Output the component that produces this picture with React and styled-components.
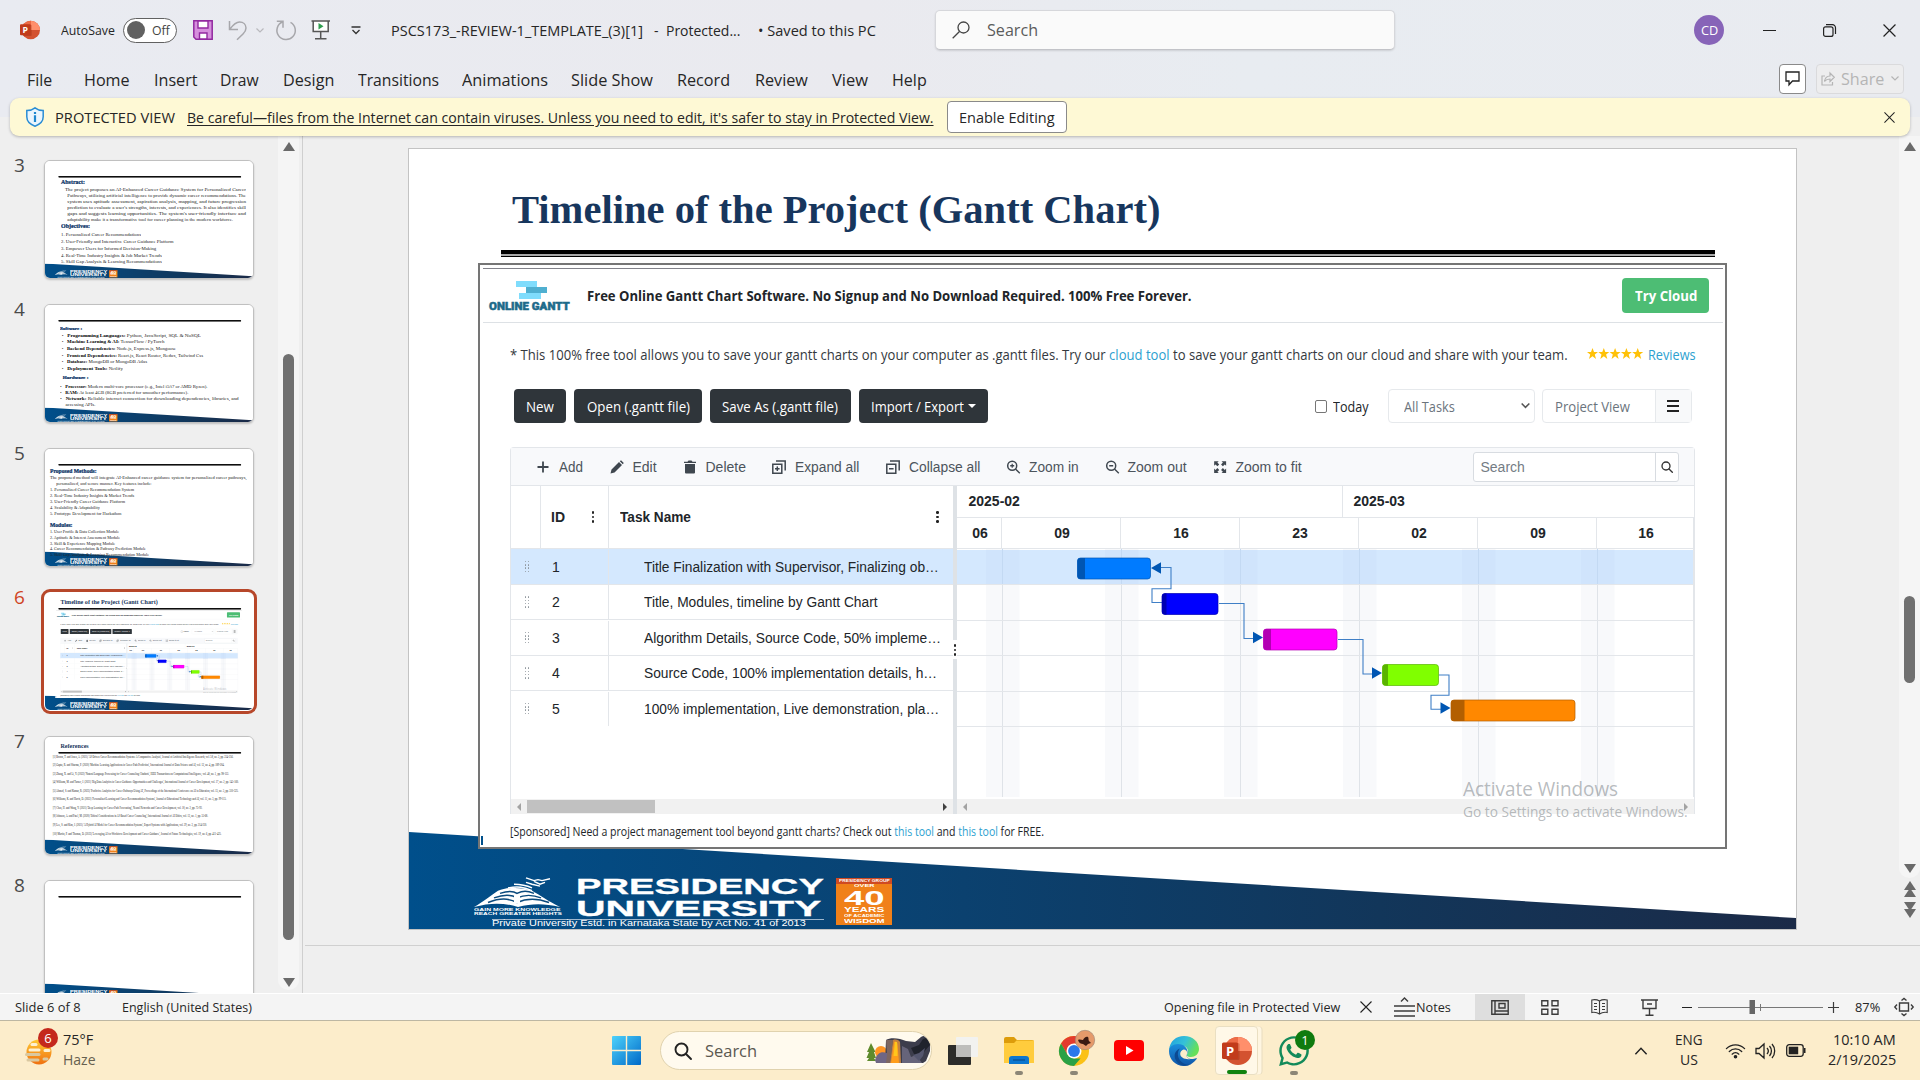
import React, { useLayoutEffect, useRef, useState } from "react";
import styled, { createGlobalStyle, css } from "styled-components";
import { FaWhatsapp } from "react-icons/fa";

const UI = `"Open Sans", "Noto Sans", sans-serif`;
const ARIAL = `"Liberation Sans", Arial, sans-serif`;
const SERIF = `"Liberation Serif", "Times New Roman", serif`;

const Global = createGlobalStyle`
  * { box-sizing: border-box; }
  html, body { margin: 0; padding: 0; width: 1920px; height: 1080px; overflow: hidden; }
  body { font-family: ${UI}; color: #262626; }
  svg { display: block; overflow: visible; flex: none; }
`;

/* ---------- text that keeps a given width ---------- */

const FitBox = styled.span`
  display: block;
  flex: none;
  width: ${(p) => p.$w}px;
  margin-left: ${(p) => p.$ml || 0}px;
  white-space: nowrap;
  font-size: ${(p) => (p.$size ? `${p.$size}px` : "inherit")};
  font-weight: ${(p) => p.$weight || "inherit"};
  color: ${(p) => p.$color || "inherit"};
`;
const FitInner = styled.span`
  display: inline-block;
  transform-origin: 0 50%;
`;

function Fit({ w, ml, size, weight, color, children }) {
  const ref = useRef(null);
  const [k, setK] = useState(1);
  useLayoutEffect(() => {
    const natural = ref.current.offsetWidth;
    if (natural) setK(w / natural);
  }, [w]);
  return (
    <FitBox $w={w} $ml={ml} $size={size} $weight={weight} $color={color}>
      <FitInner ref={ref} style={{ transform: `scaleX(${k})` }}>
        {children}
      </FitInner>
    </FitBox>
  );
}

const Slot = styled.span`
  display: flex;
  flex: none;
  align-items: center;
  width: ${(p) => p.$w}px;
  margin-left: ${(p) => p.$ml || 0}px;
  justify-content: ${(p) => (p.$center ? "center" : "flex-start")};
`;

/* ---------- icons ---------- */

const PowerPointIcon = ({ size = 20 }) => (
  <svg width={size} height={size} viewBox="0 0 30 30">
    <circle cx="16" cy="15" r="14" fill="#d35230" />
    <path d="M16 1a14 14 0 0 1 14 14H16z" fill="#ff8f6b" />
    <path d="M16 1A14 14 0 0 0 2 15h14z" fill="#ed6c47" />
    <rect x="4" y="7" width="13.5" height="17" rx="1.5" fill="#8d2a12" opacity=".35" />
    <rect x="0" y="6.500" width="16" height="16.500" rx="1.500" fill="#c13b1b" />
    <text x="8" y="19.500" textAnchor="middle" fontFamily="Open Sans, sans-serif" fontWeight="700" fontSize="13" fill="#fff">P</text>
  </svg>
);
const SaveIcon = () => (
  <svg width="20" height="20" viewBox="0 0 20 20">
    <path d="M.8.800h18.400v18.400H3L.8 17z" fill="#d68fdd" stroke="#9229a0" strokeWidth="1.500" />
    <path d="M5 1h10v7H5zM6.500 19v-6h7.500v6z" fill="#fff" stroke="#9229a0" strokeWidth="1.400" />
  </svg>
);
const UndoIcon = () => (
  <svg width="20" height="20" viewBox="0 0 20 20" fill="none" stroke="#a7a7ab" strokeWidth="1.500">
    <path d="M1.500 1v8.500H10M1.800 9.200C5 5 8 2 11.500 2c4 0 6.500 2.500 6.500 6 0 2.500-1 4-3 6l-6 5.800" />
  </svg>
);
const RedoIcon = () => (
  <svg width="20" height="20" viewBox="0 0 20 20" fill="none" stroke="#a7a7ab" strokeWidth="1.500">
    <path d="M.8 1.200H7v6.500M6.800 1.800A9.200 9.200 0 1 0 14.500 2.300" />
  </svg>
);
const Chevron = ({ w = 8, color = "#8a8a8a", up, sw = 1.2 }) => (
  <svg width={w} height={w / 2 + 1} viewBox="0 0 8 5" fill="none" stroke={color} strokeWidth={sw}>
    <path d={up ? "M.5 4.500 4 .8l3.500 3.700" : "M.5.500 4 4 7.500.500"} />
  </svg>
);
const PresentIcon = () => (
  <svg width="20" height="20" viewBox="0 0 20 20" fill="none" stroke="#555" strokeWidth="1.500">
    <path d="M.5 1h18.500M2.200 1v10.500h15V1" fill="#fff" />
    <path d="M9.700 11.500v7M4 18.800h11.500" />
    <path d="m7.500 3 5 3.200-5 3.300z" fill="#2e9e4f" stroke="none" />
  </svg>
);
const CustomizeIcon = () => (
  <svg width="10" height="9" viewBox="0 0 10 9" fill="none" stroke="#333" strokeWidth="1.300">
    <path d="M.5 1h9M1.500 4 5 7.500 8.500 4" />
  </svg>
);
const LoupeIcon = ({ size = 18, flip, color = "#444", sw = 1.3 }) => (
  <svg width={size} height={size} viewBox="0 0 18 18" fill="none" stroke={color} strokeWidth={sw}>
    {flip ? <><circle cx="11.500" cy="6.500" r="5.500" /><path d="M7.500 10.500.700 17.300" /></> : <><circle cx="7.500" cy="7.500" r="6" /><path d="m12 12 5 5" strokeLinecap="round" /></>}
  </svg>
);
const CrossIcon = ({ size = 13, color = "#222" }) => (
  <svg width={size} height={size} viewBox="0 0 12 12" stroke={color} strokeWidth="1.100"><path d="m.5.500 11 11M11.500.500l-11 11" /></svg>
);
const RestoreIcon = () => (
  <svg width="13" height="13" viewBox="0 0 13 13" fill="none" stroke="#222" strokeWidth="1.200">
    <rect x=".6" y="2.800" width="9.400" height="9.600" rx="2" /><path d="M3 .7h6.500a3 3 0 0 1 3 3V10" />
  </svg>
);
const ShieldIcon = () => (
  <svg width="18" height="20" viewBox="0 0 18 20">
    <path d="M9 .8c2.500 2 5 2.700 8.200 2.700v6.300c0 4.500-3.500 7.700-8.200 9.400-4.700-1.700-8.200-4.900-8.200-9.400V3.500C4 3.500 6.500 2.800 9 .8z" fill="#e9f5fd" stroke="#2a8dd4" strokeWidth="1.500" />
    <path d="M7.900 8.300h2.200V15H7.900zM7.900 5h2.200v2H7.900z" fill="#1c87cf" />
  </svg>
);
const CommentIcon = () => (
  <svg width="15" height="15" viewBox="0 0 15 15" fill="none" stroke="#222" strokeWidth="1.300"><path d="M1 1h13v9H7.500L4 13.800V10H1z" /></svg>
);
const ShareIcon = () => (
  <svg width="14" height="15" viewBox="0 0 14 15" fill="none" stroke="#b5b5b5" strokeWidth="1.200">
    <path d="M4 5H1v9h10.500v-3M3.500 10.500C4 7 6 5 9 5V2l4.300 4.300L9 10.500V8c-2.500 0-4 .5-5.500 2.500z" />
  </svg>
);

/* ---------- window chrome ---------- */

const Screen = styled.div`
  width: 1920px;
  height: 1080px;
  display: flex;
  flex-direction: column;
  background: #efefef;
`;
const Ribbon = styled.header`
  background: linear-gradient(90deg, #e9ebf1, #eaeaef 45%, #e8ecf1 65%, #e9ebf0);
  height: 117px;
  flex: none;
`;
const TitleRow = styled.div`
  display: flex;
  align-items: center;
  height: 60px;
  font-size: 14px;
`;
const Toggle = styled.span`
  display: flex;
  align-items: center;
  flex: none;
  width: 54px;
  height: 25px;
  margin-left: 8px;
  border: 1px solid #616161;
  border-radius: 13px;
  background: #fff;
  padding-left: 3px;
  color: #444;
`;
const Knob = styled.i`
  width: 18px;
  height: 18px;
  border-radius: 50%;
  background: #616161;
`;
const SearchBox = styled.div`
  display: flex;
  align-items: center;
  flex: none;
  width: 460px;
  height: 40px;
  margin-left: 59px;
  padding: 0 0 1px 16px;
  background: #fafafa;
  border: 1px solid #d6d7db;
  border-bottom-color: #c2c3c8;
  border-radius: 5px;
  box-shadow: 0 1px 2px rgba(0, 0, 0, 0.12);
  color: #5c5c5c;
`;
const Avatar = styled.span`
  flex: none;
  display: flex;
  align-items: center;
  justify-content: center;
  width: 30px;
  height: 30px;
  margin-left: 299px;
  border-radius: 50%;
  background: #8764b8;
  color: #fff;
  font-size: 12px;
`;
const Dash = styled.i`
  width: ${(p) => p.$w || 13}px;
  height: ${(p) => p.$t || 1}px;
  background: #222;
`;
const TabRow = styled.nav`
  display: flex;
  align-items: center;
  height: 38px;
  padding: 0 16px 0 27px;
  font-size: 16.5px;
`;
const OutlineButton = styled.span`
  display: flex;
  align-items: center;
  justify-content: center;
  flex: none;
  width: ${(p) => p.$w}px;
  height: ${(p) => p.$h}px;
  margin-left: ${(p) => p.$ml};
  margin-top: ${(p) => p.$mt || 0}px;
  background: ${(p) => (p.$off ? "#ededee" : "#fff")};
  border: 1px solid ${(p) => (p.$off ? "#dadadc" : "#8a8a8a")};
  border-radius: 4px;
`;
const Banner = styled.div`
  flex: none;
  display: flex;
  align-items: center;
  height: 38px;
  margin: -19px 10px 0;
  padding: 0 13px 0 16px;
  background: #fef9d5;
  border-radius: 9px;
  box-shadow: 0 1px 3px rgba(0, 0, 0, 0.25);
  font-size: 14.2px;
  position: relative;
`;
const Underlined = styled.span`
  text-decoration: underline;
  text-underline-offset: 2px;
`;

const TABS = [
  ["File", 0, 25], ["Home", 32, 46], ["Insert", 24, 43], ["Draw", 23, 39], ["Design", 24, 51],
  ["Transitions", 24, 81], ["Animations", 23, 86], ["Slide Show", 23, 82], ["Record", 24, 53],
  ["Review", 25, 53], ["View", 24, 36], ["Help", 24, 35],
];

/* ---------- slide ---------- */

const SlideBox = styled.div`
  position: relative;
  width: 1387px;
  height: 780px;
  background: #fff;
  overflow: hidden;
  flex: none;
`;
const SlideTitle = styled.div`
  padding: 38px 0 0 103px;
  height: 101px;
  font: 700 40px/46px ${SERIF};
  color: #17365d;
`;
const Rule = styled.div`
  width: 1214px;
  height: 7px;
  margin-left: 92px;
  border-top: 4px solid #000;
  border-bottom: 1px solid #000;
  background: ${(p) => (p.$solid ? "#000" : "#a8a8a8")};
  box-shadow: ${(p) => (p.$solid ? "0 0 0 1px #000" : "none")};
`;
const FooterLayer = styled.div`
  position: absolute;
  left: 0;
  right: 0;
  bottom: 0;
  height: 97px;
`;
const FooterShape = styled.div`
  height: 97px;
  background: linear-gradient(90deg, #004f8b, #0b416f 40%, #12365a 70%, #1b2a47);
  clip-path: polygon(0 0, 100% 86px, 100% 100%, 0 100%);
  display: flex;
  padding: 44px 0 0 65px;
  color: #fff;
  font-family: ${ARIAL};
`;
const Crest = styled.div`
  width: 90px;
  display: flex;
  flex-direction: column;
  font: 700 4px/4.4px ${ARIAL};
`;
const UniName = styled.div`
  width: 248px;
  margin-left: 12px;
  font: 700 22.6px/21.5px ${ARIAL};
  -webkit-text-stroke: 0.3px #fff;
`;
const UniNote = styled.div`
  border-top: 1px solid #9fb7cd;
  margin: -0.5px 0 0 -84px;
  width: 332px;
  font: 400 8.5px/7.5px ${ARIAL};
  -webkit-text-stroke: 0;
  display: flex;
`;
const Badge40 = styled.div`
  display: flex;
  flex-direction: column;
  align-items: center;
  width: 56px;
  height: 47px;
  margin: 2px 0 0 12px;
  background: #f08019;
  font: 700 7px/6px ${ARIAL};
`;
const BadgeTop = styled.div`
  width: 56px;
  height: 6px;
  background: #cf4a22;
  font-size: 4px;
  display: flex;
  justify-content: center;
`;
const BadgeLine = styled.div`
  font-size: ${(p) => p.$s}px;
  line-height: ${(p) => p.$h}px;
`;

const Footer = () => (
  <FooterLayer>
    <FooterShape>
      <Crest>
        <svg width="90" height="32" viewBox="0 0 90 35" preserveAspectRatio="none" fill="none" stroke="#fff">
          <path d="M0 34c10-7 16-12 24-18 10-4 24-4 34 0 8 5 16 11 28 18-16-4-28-4-42 0-14-5-28-5-44 0z" fill="#fff" stroke="none" />
          <path d="M14 29c12-5 20-5 29 0 10-5 20-5 32 0M20 24c10-4 17-4 23 0 8-4 15-4 24 0M26 19c8-3 13-3 17 0 6-3 10-3 17 0" stroke="#0b4a7d" strokeWidth="1.600" />
          <path d="M34 13c10-2 16-1 24 3M40 9c8 0 12 1 18 4M52 2l8 3 4-1 4 1 8-2M60 6l6 3 5-2M52 7l6 2 8 2" strokeWidth="1.500" />
          <path d="M40 21h6v9h-6z" fill="#fff" stroke="none" />
        </svg>
        <Fit w={87}>GAIN MORE KNOWLEDGE</Fit>
        <Fit w={87}>REACH GREATER HEIGHTS</Fit>
      </Crest>
      <UniName>
        <Fit w={248}>PRESIDENCY</Fit>
        <Fit w={246}>UNIVERSITY</Fit>
        <UniNote><Fit w={314}>Private University Estd. in Karnataka State by Act No. 41 of 2013</Fit></UniNote>
      </UniName>
      <Badge40>
        <BadgeTop><Fit w={51}>PRESIDENCY GROUP</Fit></BadgeTop>
        <BadgeLine $s={3.6} $h={4.5}><Fit w={20}>OVER</Fit></BadgeLine>
        <BadgeLine $s={20.5} $h={17}><Fit w={41}>40</Fit></BadgeLine>
        <BadgeLine $s={7.6} $h={8}><Fit w={40}>YEARS</Fit></BadgeLine>
        <BadgeLine $s={3.6} $h={4.5}><Fit w={40}>OF ACADEMIC</Fit></BadgeLine>
        <BadgeLine $s={6} $h={6.5}><Fit w={40}>WISDOM</Fit></BadgeLine>
      </Badge40>
    </FooterShape>
  </FooterLayer>
);

const Slide = ({ title, mini, children }) => (
  <SlideBox>
    <Footer />
    <SlideTitle>{title}</SlideTitle>
    <Rule $solid={mini} />
    {children}
  </SlideBox>
);

/* ---------- gantt picture ---------- */

const Picture = styled.div`
  position: relative;
  width: 1249px;
  height: 586px;
  margin: 6px 0 0 69px;
  padding-left: 0.5px;
  border: 2px solid ${(p) => (p.$mini ? "#fff" : "#757575")};
  background: #fff;
  color: #212529;
  font-size: 14px;
  display: flex;
  flex-direction: column;
`;
const PicHeader = styled.div`
  display: flex;
  align-items: center;
  flex: none;
  height: 55px;
  margin: 3px 2px 0;
  padding: 0 14px 0 6px;
  border-top: 1px solid #82828a;
  border-bottom: 1px solid #dde1e5;
`;
const GanttLogo = styled.div`
  width: 81px;
  display: flex;
  flex-direction: column;
  margin-right: 17px;
  padding-top: 2px;
  font: 900 11px/12px "Roboto", sans-serif;
  color: #1d6a8a;
  -webkit-text-stroke: 0.5px #1d6a8a;
`;
const TryButton = styled.span`
  margin-left: auto;
  display: flex;
  align-items: center;
  justify-content: center;
  width: 87px;
  height: 35px;
  border-radius: 4px;
  background: #4dbd74;
  color: #fff;
`;
const InfoRow = styled.div`
  flex: none;
  display: flex;
  align-items: center;
  height: 64px;
  padding: 0 0 2px 29px;
  font-size: 14.3px;
  color: #34393e;
`;
const Link = styled.span`
  color: #2d9fd0;
`;
const ActionRow = styled.div`
  flex: none;
  display: flex;
  align-items: center;
  height: 34px;
  margin-top: 2px;
  padding-left: 33px;
`;
const DarkButton = styled.span`
  flex: none;
  display: flex;
  align-items: center;
  justify-content: center;
  gap: 4px;
  width: ${(p) => p.$w}px;
  height: 34px;
  margin-right: 8px;
  border-radius: 4px;
  background: #2f353a;
  color: #fff;
  font-size: 14.3px;
`;
const Caret = styled.i`
  border: 4px solid transparent;
  border-top-color: #fff;
  border-bottom: 0;
`;
const CheckBox = styled.i`
  width: 12px;
  height: 13px;
  margin-left: 319px;
  border: 1px solid #767676;
  border-radius: 2px;
`;
const Field = styled.span`
  flex: none;
  display: flex;
  align-items: center;
  width: ${(p) => p.$w}px;
  height: 34px;
  margin-left: ${(p) => p.$ml}px;
  padding-left: ${(p) => p.$pl}px;
  border: 1px solid #e6e9ec;
  border-radius: 4px;
  color: #6b747d;
  font-size: 14px;
`;
const Burger = styled.span`
  display: flex;
  flex-direction: column;
  align-items: center;
  justify-content: center;
  gap: 3.5px;
  width: 36px;
  height: 32px;
  margin-left: auto;
  border-left: 1px solid #e6e9ec;
  background: #f8f9fa;
`;
const GridFrame = styled.div`
  flex: none;
  width: 1185px;
  height: 367px;
  margin: 24px 0 0 29px;
  border: 1px solid #e3e6ea;
  border-radius: 4px 4px 0 0;
  border-bottom: 0;
  font-family: ${ARIAL};
`;
const GridTools = styled.div`
  display: flex;
  align-items: center;
  height: 38px;
  background: #f8f9fb;
  border-bottom: 1px solid #e3e6ea;
  font-size: 14px;
  color: #4c545c;
`;
const GridSearch = styled.span`
  display: flex;
  align-items: center;
  width: 206px;
  height: 30px;
  margin-left: 171px;
  padding-left: 7px;
  background: #fff;
  border: 1px solid #d8dce1;
  border-radius: 3px;
  color: #747c84;
`;
const SearchKey = styled.span`
  display: flex;
  align-items: center;
  justify-content: center;
  width: 23px;
  height: 28px;
  margin-left: auto;
  border-left: 1px solid #d8dce1;
`;
const Split = styled.div`
  display: flex;
  height: 328px;
`;
const TaskPane = styled.div`
  width: 442px;
`;
const cell = css`
  display: flex;
  align-items: center;
  flex: none;
  height: 100%;
`;
const Cell = styled.span`
  ${cell}
  width: ${(p) => p.$w}px;
  padding-left: ${(p) => p.$pl || 0}px;
  border-right: ${(p) => (p.$line ? "1px solid #e3e6ea" : "0")};
`;
const HeadRow = styled.div`
  display: flex;
  height: 63px;
  border-bottom: 1px solid #e3e6ea;
  font-weight: 700;
  font-size: 14px;
`;
const TaskRow = styled.div`
  display: flex;
  height: 35.5px;
  padding-top: 0.5px;
  font-size: 14px;
  background: ${(p) => (p.$on ? "#d4e8fe" : "#fff")};
  border-bottom: 1px solid ${(p) => (p.$last ? "transparent" : "#e3e6ea")};
`;
const Dots = styled.span`
  display: grid;
  grid-template-columns: repeat(${(p) => p.$cols || 1}, ${(p) => p.$s}px);
  gap: ${(p) => p.$gap}px;
  margin-left: ${(p) => p.$ml || 0};
  margin-right: ${(p) => p.$mr || 0}px;
`;
const Dot = styled.i`
  width: ${(p) => p.$s}px;
  height: ${(p) => p.$s}px;
  border-radius: 50%;
  background: ${(p) => p.$c};
`;
const Filler = styled.div`
  height: 72.5px;
`;
const HScroll = styled.div`
  display: flex;
  align-items: center;
  height: 15px;
  background: #f1f1f1;
  padding: 0 6px;
`;
const HThumb = styled.i`
  width: 128px;
  height: 13px;
  margin-left: 6px;
  background: #c1c1c1;
`;
const Arrow = styled.i`
  border: 4px solid transparent;
  border-left-width: ${(p) => (p.$left ? 0 : 4)}px;
  border-right-width: ${(p) => (p.$left ? 4 : 0)}px;
  border-left-color: ${(p) => (p.$left ? "transparent" : p.$c)};
  border-right-color: ${(p) => (p.$left ? p.$c : "transparent")};
  margin-left: ${(p) => (p.$end ? "auto" : 0)};
`;
const Splitter = styled.div`
  width: 4px;
  height: 328px;
  display: flex;
  align-items: center;
  background: linear-gradient(#dee2e6 154px, #fff 154px 173px, #dee2e6 173px);
`;
const TimePane = styled.div`
  width: 737px;
`;
const MonthRow = styled.div`
  display: flex;
  height: 31.5px;
  border-bottom: 1px solid #e3e6ea;
  font-weight: 700;
  font-size: 14px;
`;
const Week = styled.span`
  display: flex;
  flex: none;
  align-items: center;
  justify-content: center;
  width: ${(p) => p.$w}px;
  padding-left: 3px;
  border-right: 1px solid #e3e6ea;
`;
const Sponsored = styled.div`
  display: flex;
  align-items: center;
  height: 18px;
  margin-top: 8px;
  padding-left: 29px;
  font-size: 11.8px;
`;
const Cursor = styled.i`
  position: absolute;
  left: 1px;
  bottom: 2px;
  width: 1.5px;
  height: 9px;
  background: #00508c;
`;
const Watermark = styled.div`
  position: absolute;
  left: 983px;
  top: 509px;
  display: flex;
  flex-direction: column;
  color: rgba(140, 145, 150, 0.62);
  font-size: 20px;
  line-height: 30px;
`;
const WatermarkSmall = styled.span`
  font-size: 14.5px;
  line-height: 15px;
`;

const ToolIcon = ({ kind }) => {
  const s = { fill: "none", stroke: "#3f474f", strokeWidth: 1.5 };
  return (
    <svg width="14" height="14" viewBox="0 0 14 14" {...s}>
      {kind === "add" && <path d="M7 1.500v11M1.500 7h11" strokeWidth="1.800" />}
      {kind === "edit" && <path d="m.5 13.500 1-4L9 2l3 3-7.500 7.500zM9.800 1.200 11 .2l2.800 2.800-1 1.200z" fill="#3f474f" stroke="none" />}
      {kind === "delete" && <path d="M2 4h10v8.500a1 1 0 0 1-1 1H3a1 1 0 0 1-1-1zM1 1.800h3.500L5.500.500h3l1 1.300H13V3H1z" fill="#3f474f" stroke="none" />}
      {(kind === "expand" || kind === "collapse") && <path d="M.8 4.200h9v9h-9zM4 1h9.200v9.500M3 8.700h4.600" />}
      {kind === "expand" && <path d="M5.300 6.400V11" />}
      {(kind === "in" || kind === "out") && <><circle cx="6.200" cy="5.700" r="4.500" /><path d="m9.500 9 4.300 4.300M4.200 5.700h4" strokeWidth="1.400" /></>}
      {kind === "in" && <path d="M6.200 3.700v4" strokeWidth="1.200" />}
      {kind === "fit" && <path transform="translate(.7 .7) scale(.92)" d="M.5.500h5L4 2l2 2-2 2-2-2L.500 5.500zM13.500.500v5L12 4l-2 2-2-2 2-2L8.500.500zM.5 13.500v-5L2 10l2-2 2 2-2 2 1.500 1.500zM13.500 13.500h-5L10 12l-2-2 2-2 2 2 1.500-1.500z" fill="#3f474f" stroke="none" />}
    </svg>
  );
};
const TOOLS = [
  ["add", "Add", 25, 24], ["edit", "Edit", 27, 24], ["delete", "Delete", 26, 40], ["expand", "Expand all", 26, 64],
  ["collapse", "Collapse all", 27, 71], ["in", "Zoom in", 26, 50], ["out", "Zoom out", 26, 59], ["fit", "Zoom to fit", 26, 66],
];
const TASKS = [
  ["1", "Title Finalization with Supervisor, Finalizing ob…", 295],
  ["2", "Title, Modules, timeline by Gantt Chart", 234],
  ["3", "Algorithm Details, Source Code, 50% impleme…", 297],
  ["4", "Source Code, 100% implementation details, h…", 293],
  ["5", "100% implementation, Live demonstration, pla…", 295],
];
const BARS = [
  [120, 8.5, 74, 8, "#007bff", "#0056b3"],
  [204.500, 44, 57, 5, "#0000ff", "#0000b3"],
  [306, 79.500, 74.500, 8, "#ff00ff", "#b300b3"],
  [425, 115, 57, 6, "#80ff00", "#59b300"],
  [493.500, 150.500, 125, 14, "#ff8800", "#b35f00"],
];
const WEEKENDS = [29, 148, 267, 386, 505, 624];
const LINKS = "M204 18.500H214V39.700H195V53.500H205M262 54.500H287V89.500H297M381 90.500H406V125H416M482 126H492V146.300H474V160.300H484";
const HEADS = "M194 19 204 13.300V24.700zM306 88.500 296 82.800V94.200zM425 124 415 118.300V129.700zM493.500 159 483.500 153.300V164.700z";

const Chart = () => (
  <svg width="737" height="250" viewBox="0 0 737 250">
    {WEEKENDS.map((x) => <rect key={x} x={x} y="0" width="33.500" height="248" fill="#f8f9fb" />)}
    <rect x="0" y="1" width="737" height="35" fill="#d4e8fe" />
    {WEEKENDS.map((x) => <rect key={x} x={x} y="1" width="33.500" height="35" fill="#d0e4fc" />)}
    {WEEKENDS.map((x) => <path key={x} d={`M${x + 16.500} 36V248`} stroke="#dfe3e8" />)}
    {WEEKENDS.map((x) => <path key={x} d={`M${x + 16.500} 0V36`} stroke="#c3d9f3" />)}
    {[35.500, 71.500, 106.500, 142.500, 177.500].map((y) => <path key={y} d={`M0 ${y}H737`} stroke="#e3e6ea" />)}
    <path d="M736.500 0V248" stroke="#e3e6ea" />
    <path d={LINKS} fill="none" stroke="#3f7fc6" strokeWidth="1.100" />
    <path d={HEADS} fill="#0056b3" />
    {BARS.map(([x, y, w, d, c, k]) => (
      <g key={x}>
        <rect x={x + 0.5} y={y + 0.5} width={w - 1} height="21" rx="3" fill={c} />
        <path d={`M${x + d} ${y + 0.5}h${3.500 - d}a3 3 0 0 0-3 3v15a3 3 0 0 0 3 3h${d - 3.500}z`} fill={k} />
        <rect x={x + 0.5} y={y + 0.5} width={w - 1} height="21" rx="3" fill="none" stroke={k} strokeOpacity=".7" />
      </g>
    ))}
  </svg>
);

const VDots = ({ ml, mr }) => (
  <Dots $s={2.5} $gap={2} $ml={ml} $mr={mr}>{[0, 1, 2].map((i) => <Dot key={i} $s={2.5} $c="#222" />)}</Dots>
);

const GanttPicture = ({ mini }) => (
  <Picture $mini={mini}>
    <PicHeader>
      <GanttLogo>
        <svg width="81" height="20" viewBox="0 0 81 20">
          <path d="M27 0h21v6H27zM30 12h22v6H30z" fill="#7fdcfc" /><path d="M37 6h21v6H37z" fill="#4fafd0" />
        </svg>
        <Fit w={81}>ONLINE GANTT</Fit>
      </GanttLogo>
      <Fit w={604.5} weight={700} size={13.8}>Free Online Gantt Chart Software. No Signup and No Download Required. 100% Free Forever.</Fit>
      <TryButton><Fit w={62} weight={700} size={14.3}>Try Cloud</Fit></TryButton>
    </PicHeader>
    <InfoRow>
      <Fit w={1058}>* This 100% free tool allows you to save your gantt charts on your computer as .gantt files. Try our <Link>cloud tool</Link> to save your gantt charts on our cloud and share with your team.</Fit>
      <Slot $w={56} $ml={19}>
        <svg width="56" height="12" viewBox="0 0 56 12" fill="#ffc107">
          {[0, 1, 2, 3, 4].map((i) => <path key={i} transform={`translate(${i * 11.300} 0)`} d="m5.500 0 1.500 4h4L7.800 6.500 9 11 5.500 8.300 2 11l1.200-4.500L0 4h4z" />)}
        </svg>
      </Slot>
      <Fit w={48} ml={5} color="#2d9fd0">Reviews</Fit>
    </InfoRow>
    <ActionRow>
      <DarkButton $w={52.5}><Fit w={28}>New</Fit></DarkButton>
      <DarkButton $w={128}><Fit w={103}>Open (.gantt file)</Fit></DarkButton>
      <DarkButton $w={140.5}><Fit w={116}>Save As (.gantt file)</Fit></DarkButton>
      <DarkButton $w={129}><Fit w={93}>Import / Export</Fit><Caret /></DarkButton>
      <CheckBox />
      <Fit w={36} ml={6}>Today</Fit>
      <Field $w={147} $ml={19} $pl={15}><Fit w={51}>All Tasks</Fit><Slot $w={10} $ml={66}><Chevron w={9} color="#555" sw={1.4} /></Slot></Field>
      <Field $w={150} $ml={7} $pl={12}><Fit w={75}>Project View</Fit><Burger><Dash $w={12} $t={1.5} /><Dash $w={12} $t={1.5} /><Dash $w={12} $t={1.5} /></Burger></Field>
    </ActionRow>
    <GridFrame>
      <GridTools>
        {TOOLS.map(([k, t, ml, w]) => (
          <React.Fragment key={k}><Slot $w={14} $ml={ml}><ToolIcon kind={k} /></Slot><Fit w={w} ml={9}>{t}</Fit></React.Fragment>
        ))}
        <GridSearch><Fit w={44}>Search</Fit><SearchKey><LoupeIcon size={12} color="#333" sw={2} /></SearchKey></GridSearch>
      </GridTools>
      <Split>
        <TaskPane>
          <HeadRow>
            <Cell $w={30.5} $line />
            <Cell $w={68} $line $pl={10}><Fit w={14}>ID</Fit><VDots ml="auto" mr={14} /></Cell>
            <Cell $w={343.5} $pl={11}><Fit w={71}>Task Name</Fit><VDots ml="auto" mr={14} /></Cell>
          </HeadRow>
          {TASKS.map(([id, name, w], i) => (
            <TaskRow key={id} $on={i === 0} $last={i === 4}>
              <Cell $w={30.5} $pl={14}>
                <Dots $cols={2} $s={1.6} $gap={1.8}>{[...Array(8)].map((_, j) => <Dot key={j} $s={1.6} $c="#8d949b" />)}</Dots>
              </Cell>
              <Cell $w={68} $line $pl={11}>{id}</Cell>
              <Cell $w={343.5} $pl={35}><Fit w={w}>{name}</Fit></Cell>
            </TaskRow>
          ))}
          <Filler />
          <HScroll><Arrow $left $c="#a3a3a3" /><HThumb /><Arrow $end $c="#404040" /></HScroll>
        </TaskPane>
        <Splitter><Dots $s={2.5} $gap={2} $ml="1px">{[0, 1, 2].map((i) => <Dot key={i} $s={2.5} $c="#222" />)}</Dots></Splitter>
        <TimePane>
          <MonthRow>
            <Cell $w={386} $pl={12} $line><Fit w={51}>2025-02</Fit></Cell>
            <Cell $w={351} $pl={11}><Fit w={51}>2025-03</Fit></Cell>
          </MonthRow>
          <MonthRow>
            {[["06", 45], ["09", 119], ["16", 119], ["23", 119], ["02", 119], ["09", 119], ["16", 97]].map(([d, w], i) => <Week key={i} $w={w}>{d}</Week>)}
          </MonthRow>
          <Chart />
          <HScroll><Arrow $left $c="#a3a3a3" /><Arrow $end $c="#a3a3a3" /></HScroll>
        </TimePane>
      </Split>
    </GridFrame>
    <Sponsored><Fit w={533.5}>[Sponsored] Need a project management tool beyond gantt charts? Check out <Link>this tool</Link> and <Link>this tool</Link> for FREE.</Fit></Sponsored>
    <Cursor />
    <Watermark>
      <Fit w={155}>Activate Windows</Fit>
      <WatermarkSmall><Fit w={225}>Go to Settings to activate Windows.</Fit></WatermarkSmall>
    </Watermark>
  </Picture>
);

/* ---------- thumbnails ---------- */

const Line = styled.div`
  position: relative;
  display: flex;
  align-items: center;
  height: ${(p) => p.$h}px;
  margin-top: ${(p) => p.$mt || 0}px;
  padding-left: ${(p) => p.$x}px;
  font: ${(p) => (p.$b ? 700 : 400)} ${(p) => p.$s}px/1 ${SERIF};
  color: ${(p) => (p.$b ? "#0c3468" : "#222")};
  -webkit-text-stroke: ${(p) => (p.$b ? "1.5px #0c3468" : "0")};
`;
const TextLines = ({ lines }) =>
  lines.map(([x, w, h, text, opt = {}], i) => (
    <Line key={i} $x={x} $h={h} $mt={opt.mt} $b={opt.b} $s={opt.s || 32}><Fit w={w}>{text}</Fit></Line>
  ));
const B = styled.b`
  color: #000;
`;

const ABSTRACT = [
  [107, 160, 40, "Abstract:", { b: 1, s: 35, mt: 11 }],
  [133, 1207, 40, "The project proposes an AI-Enhanced Career Guidance System for Personalized Career", { mt: 7 }],
  [149, 1191, 40, "Pathways, utilizing artificial intelligence to provide dynamic career recommendations. The"],
  [149, 1191, 40, "system uses aptitude assessment, aspiration analysis, mapping, and future progression"],
  [149, 1191, 40, "prediction to evaluate a user's strengths, interests, and experiences. It also identifies skill"],
  [149, 1191, 40, "gaps and suggests learning opportunities. The system's user-friendly interface and"],
  [149, 1104, 40, "adaptability make it a transformative tool for career planning in the modern workforce."],
  [107, 193, 40, "Objectives:", { b: 1, s: 35, mt: 11 }],
  [107, 533, 46.5, "1. Personalized Career Recommendations", { mt: 6 }],
  [107, 750, 46.5, "2. User-Friendly and Interactive Career Guidance Platform"],
  [107, 635, 46.5, "3. Empower Users for Informed Decision-Making"],
  [107, 672, 46.5, "4. Real-Time Industry Insights & Job Market Trends"],
  [107, 672, 46.5, "5. Skill Gap Analysis & Learning Recommendations"],
];
const SOFTWARE = [
  [100, 147, 40, "Software :", { b: 1, s: 28, mt: 31 }],
  [111, 929, 44, <>•&nbsp;&nbsp; <B>Programming Languages:</B> Python, JavaScript, SQL &amp; NoSQL</>],
  [111, 685, 44, <>•&nbsp;&nbsp; <B>Machine Learning &amp; AI:</B> TensorFlow / PyTorch</>],
  [111, 762, 44, <>•&nbsp;&nbsp; <B>Backend Dependencies:</B> Node.js, Express.js, Mongoose</>],
  [111, 942, 44, <>•&nbsp;&nbsp; <B>Frontend Dependencies:</B> React.js, React Router, Redux, Tailwind Css</>],
  [111, 569, 44, <>•&nbsp;&nbsp; <B>Database:</B> MongoDB or MongoDB Atlas</>],
  [111, 409, 44, <>•&nbsp;&nbsp; <B>Deployment Tools:</B> Netlify</>],
  [118, 172, 40, "Hardware :", { b: 1, s: 28, mt: 24 }],
  [100, 984, 42, <>•&nbsp;&nbsp; <B>Processor:</B> Modern multi-core processor (e.g., Intel i5/i7 or AMD Ryzen).</>, { mt: 12 }],
  [100, 856, 42, <>•&nbsp;&nbsp; <B>RAM:</B> At least 4GB (8GB preferred for smoother performance).</>],
  [100, 1191, 42, <>•&nbsp;&nbsp; <B>Network:</B> Reliable internet connection for downloading dependencies, libraries, and</>],
  [136, 200, 34, "accessing APIs."],
];
const METHODS = [
  [33, 311, 40, "Proposed Methods:", { b: 1, s: 36, mt: 22 }],
  [33, 1311, 36, "The proposed method will integrate AI-Enhanced career guidance system for personalized career pathways,", { s: 28, mt: 6 }],
  [75, 635, 36, "personalized, and secure manner. Key features include:", { s: 28 }],
  [33, 562, 40, "1. Personalized Career Recommendation System", { s: 28 }],
  [33, 562, 40, "2. Real-Time Industry Insights & Market Trends", { s: 28 }],
  [33, 500, 40, "3. User-Friendly Career Guidance Platform", { s: 28 }],
  [33, 333, 40, "4. Scalability & Adaptability", { s: 28 }],
  [33, 476, 40, "5. Prototype Development for Hackathon", { s: 28 }],
  [33, 150, 40, "Modules:", { b: 1, s: 36, mt: 42 }],
  [33, 460, 37, "1. User Profile & Data Collection Module", { s: 28, mt: 5 }],
  [33, 467, 37, "2. Aptitude & Interest Assessment Module", { s: 28 }],
  [33, 435, 37, "3. Skill & Experience Mapping Module", { s: 28 }],
  [33, 640, 37, "4. Career Recommendation & Pathway Prediction Module", { s: 28 }],
  [33, 660, 37, "5. Skill Gap Analysis & Learning Recommendation Module", { s: 28 }],
];
const REFS = [
  [1256, "[1] Brown, T. and Jones, A. (2021) 'AI-Driven Career Recommendation Systems: A Comparative Analysis', Journal of Artificial Intelligence Research, vol. 58, no. 3, pp. 234-256."],
  [1196, "[2] Gupta, R. and Sharma, P. (2020) 'Machine Learning Applications in Career Path Prediction', International Journal of Data Science and AI, vol. 12, no. 4, pp. 189-204."],
  [1227, "[3] Zhang, X. and Li, Y. (2022) 'Natural Language Processing for Career Counseling Chatbots', IEEE Transactions on Computational Intelligence, vol. 40, no. 1, pp. 98-112."],
  [1291, "[4] Williams, M. and Turner, J. (2021) 'Big Data Analytics in Career Guidance: Opportunities and Challenges', International Journal of Career Development, vol. 17, no. 2, pp. 145-160."],
  [1289, "[5] Ahmed, S. and Kumar, R. (2023) 'Predictive Analytics for Career Pathways Using AI', Proceedings of the International Conference on AI in Education, vol. 15, no. 5, pp. 310-325."],
  [1209, "[6] Williams, K. and Harris, D. (2022) 'Personalized Learning and Career Recommendation Systems', Journal of Educational Technology and AI, vol. 11, no. 3, pp. 99-115."],
  [1049, "[7] Chen, H. and Wang, Y. (2021) 'Deep Learning for Career Path Forecasting', Neural Networks and Career Development, vol. 18, no. 2, pp. 75-92."],
  [1087, "[8] Johnson, A. and Patel, M. (2020) 'Ethical Considerations in AI-Based Career Counseling', International Journal of AI Ethics, vol. 13, no. 1, pp. 55-68."],
  [1080, "[9] Lee, S. and Kim, J. (2021) 'A Hybrid AI Model for Career Recommendation Systems', Expert Systems with Applications, vol. 29, no. 3, pp. 214-230."],
  [1176, "[10] Martin, P. and Thomas, D. (2022) 'Leveraging AI for Workforce Development and Career Guidance', Journal of Future Technologies, vol. 19, no. 6, pp. 411-425."],
].map(([w, t], i) => [51, w - 51, 57, t, { s: 21, mt: i ? 0 : -6 }]);

const SLIDES = [
  { n: 3, body: <TextLines lines={ABSTRACT} /> },
  { n: 4, body: <TextLines lines={SOFTWARE} /> },
  { n: 5, body: <TextLines lines={METHODS} /> },
  { n: 6, title: <Fit w={648}>Timeline of the Project (Gantt Chart)</Fit>, body: <GanttPicture mini /> },
  { n: 7, title: <Fit w={189} size={38}>References</Fit>, body: <TextLines lines={REFS} /> },
  { n: 8 },
];

const Body = styled.main`
  display: flex;
  height: 857px;
  flex: none;
`;
const ThumbPane = styled.aside`
  flex: none;
  display: flex;
  width: 303px;
  height: 857px;
  border-right: 1px solid #cfcfcf;
  overflow: hidden;
`;
const ThumbList = styled.div`
  width: 278px;
  height: 857px;
  padding-top: 24px;
  overflow: hidden;
`;
const ThumbItem = styled.div`
  display: flex;
  height: 144px;
  padding-left: 14px;
`;
const Num = styled.span`
  width: 30px;
  font-size: 19px;
  line-height: 11px;
  color: ${(p) => (p.$on ? "#d04423" : "#4a4a4a")};
`;
const Thumb = styled.div`
  width: 210px;
  height: 118.5px;
  border: 1px solid #c0c0c0;
  border-radius: 6px;
  overflow: hidden;
  background: #fff;
  box-shadow: 0 1px 2px rgba(0, 0, 0, 0.2);
  ${(p) => p.$on && css`
    border-color: #fff;
    box-shadow: none;
    outline: 3px solid #b7472a;
  `}
`;
const Shrink = styled.div`
  width: 1387px;
  height: 779px;
  transform: scale(0.15);
  transform-origin: 0 0;
`;
const VScroll = styled.div`
  display: flex;
  flex-direction: column;
  align-items: center;
  flex: none;
  width: 21px;
  height: ${(p) => p.$h}px;
  padding: ${(p) => p.$pt}px 0 3px;
  background: #f5f5f5;
  border-radius: 0 0 10px 10px;
`;
const VThumb = styled.i`
  width: 11px;
  height: ${(p) => p.$h}px;
  margin-top: ${(p) => p.$mt}px;
  border-radius: 6px;
  background: #707070;
`;
const Tri = styled.i`
  border: 6px solid transparent;
  border-top: ${(p) => (p.$up ? "0" : "9px solid #6a6a6a")};
  border-bottom: ${(p) => (p.$up ? "9px solid #6a6a6a" : "0")};
  margin-top: ${(p) => p.$mt || 0};
`;
const Stage = styled.section`
  flex: 1;
  display: flex;
  flex-direction: column;
`;
const SlideArea = styled.div`
  display: flex;
  height: 810px;
  border-bottom: 1px solid #d0d0d0;
  margin-left: 2px;
`;
const SlideEdge = styled.div`
  margin: 12px 0 0 103px;
  width: 1389px;
  height: 782px;
  border: 1px solid #c3c3c3;
`;
const ScrollColumn = styled.div`
  display: flex;
  flex-direction: column;
  align-items: center;
  margin-left: auto;
  width: 21px;
`;

/* ---------- status bar ---------- */

const StatusBar = styled.div`
  flex: none;
  display: flex;
  align-items: center;
  height: 28px;
  background: #f4f4f4;
  border-top: 1px solid #fff;
  border-bottom: 1px solid #bdb7a3;
  font-size: 12.3px;
`;
const ViewKey = styled.span`
  display: flex;
  align-items: center;
  justify-content: center;
  width: 50px;
  height: 26px;
  margin-left: 24px;
  background: #dedede;
`;
const st = { fill: "none", stroke: "#3b3b3b", strokeWidth: 1.4 };

/* ---------- taskbar ---------- */

const Taskbar = styled.footer`
  flex: none;
  display: flex;
  align-items: center;
  height: 59px;
  background: #fcedcb;
  font-size: 14px;
`;
const TwoLine = styled.span`
  display: flex;
  flex-direction: column;
  flex: none;
  align-items: ${(p) => p.$align || "flex-start"};
  width: ${(p) => p.$w}px;
  margin-left: ${(p) => p.$ml}px;
  margin-top: -1px;
  line-height: 20px;
`;
const SearchPill = styled.span`
  display: flex;
  align-items: center;
  flex: none;
  width: 272px;
  height: 39px;
  margin-left: 19px;
  padding-left: 13px;
  border: 1px solid #e0d2ae;
  border-radius: 20px;
  background: #fffaee;
  color: #5b5850;
  overflow: hidden;
`;
const AppIcon = styled.span`
  position: relative;
  display: flex;
  align-items: center;
  justify-content: center;
  flex: none;
  width: ${(p) => p.$w || 30}px;
  height: ${(p) => p.$h || 30}px;
  margin-left: ${(p) => p.$ml}px;
`;
const RunMark = styled.i`
  position: absolute;
  left: calc(50% - ${(p) => (p.$on ? 10 : 4)}px);
  bottom: ${(p) => (p.$on ? 0 : -9)}px;
  width: ${(p) => (p.$on ? 20 : 8)}px;
  height: 4px;
  border-radius: 2px;
  background: ${(p) => (p.$on ? "#10830f" : "#8c8676")};
`;
const Count = styled.span`
  position: absolute;
  left: ${(p) => p.$x}px;
  top: ${(p) => p.$y}px;
  width: 20px;
  height: 20px;
  border-radius: 50%;
  display: flex;
  align-items: center;
  justify-content: center;
  font-size: 13px;
  background: ${(p) => p.$c};
  color: #fff;
`;
const ActiveApp = styled(AppIcon)`
  background: #fff8e8;
  border: 1px solid #eadfc2;
  border-radius: 4px;
  box-shadow: 4px 0 0 -0.5px #fff6e2, 5px 0 0 -0.5px #e8dcbf;
`;

const HazeIcon = () => (
  <svg width="34" height="34" viewBox="0 0 34 34">
    <defs><linearGradient id="sun" x1="0" y1="0" x2="0" y2="1"><stop offset="0" stopColor="#ffc933" /><stop offset="1" stopColor="#ef7010" /></linearGradient></defs>
    <circle cx="15" cy="18" r="12.500" fill="url(#sun)" />
    <g stroke="#fdf0d0" strokeWidth="3" strokeLinecap="round"><path d="M8 10.500h4" /><path d="M6 16h9M21 16.500h4" /></g>
    <g stroke="#d9c8a0" strokeWidth="3" strokeLinecap="round"><path d="M2.500 20.500H15" /><path d="M4 26h10M20 25h3" /></g>
  </svg>
);
const WindowsIcon = () => (
  <svg width="29" height="29" viewBox="0 0 29 29">
    <defs><linearGradient id="win" x1="0" y1="0" x2="1" y2="1"><stop offset="0" stopColor="#4dd2fb" /><stop offset="1" stopColor="#0069c8" /></linearGradient></defs>
    <path d="M0 1a1 1 0 0 1 1-1h12.800v13.800H0zM15.200 0H28a1 1 0 0 1 1 1v12.800H15.200zM0 15.200h13.800V29H1a1 1 0 0 1-1-1zM15.200 15.200H29V28a1 1 0 0 1-1 1H15.200z" fill="url(#win)" />
  </svg>
);
const CliffArt = () => (
  <svg width="64" height="25" viewBox="0 0 64 25">
    <path d="M4 5 0 14h2l-2.500 6H2l-2 3h9l-2-3h2l-2-6h1.500z" fill="#5f8b2c" />
    <circle cx="14" cy="14" r="6" fill="#ff9624" />
    <path d="M19 2c4-3 14-2 20 1l9 1 6-5c4-2 7-2 9 0v14l-4 10-3 2H18z" fill="#3c3d4c" />
    <path d="M8 22c2-7 6-9 12-7l4 10H9z" fill="#6f6684" />
    <path d="M19 2h7l-3 23h-4l1-8z" fill="#7d6660" />
    <path d="M26 2c3-1 6 0 7 2l1 21H23z" fill="#c48240" />
    <path d="M27 4c2-1 3 0 3.500 2L32 25h-8z" fill="#ff9d1a" /><path d="M28 4h2l.5 14h-4z" fill="#ffc61c" />
    <path d="m35 8 6 3 3 8 5-2 6 8H35z" fill="#66647a" /><path d="m44 10 8-3 4-6 6-2 1 8-6 7-9 4z" fill="#20232c" /><path d="m46 17 6-2 6-5-2 8-4 5z" fill="#54566e" />
  </svg>
);
const FolderIcon = () => (
  <svg width="30" height="27" viewBox="0 0 30 27">
    <path d="M0 2a2 2 0 0 1 2-2h8l3 3h15a2 2 0 0 1 2 2v4H0z" fill="#dd9c0b" />
    <path d="M0 6h10l2.500-2.500H30V26H0z" fill="#ffcc3d" />
    <path d="M5 27v-5a3 3 0 0 1 3-3h14a3 3 0 0 1 3 3v5z" fill="#0c77cf" /><path d="M9 23h12" stroke="#084f94" strokeWidth="1.300" />
  </svg>
);
const ChromeIcon = () => (
  <svg width="30" height="30" viewBox="0 0 30 30">
    <circle cx="15" cy="15" r="15" fill="#fbc116" />
    <path d="M2 7.500A15 15 0 0 1 28 7.500H15L8.500 18.700z" fill="#e33b2e" />
    <path d="M2 7.500 8.500 18.700 15 22.500h6.500L15 30A15 15 0 0 1 2 7.500z" fill="#2aa146" />
    <circle cx="15" cy="15" r="7.500" fill="#fff" /><circle cx="15" cy="15" r="5.900" fill="#2b78ea" />
    <circle cx="26" cy="4" r="9.700" fill="#e59a6b" stroke="#a48a78" strokeWidth=".7" />
    <path d="M19 4c2-1 3 0 5 0 1-2 3-4 5-3 1 1 0 3 1 4l2 2-3 1-2 2-3-2c-2 0-4-1-5-4z" fill="#3a1a12" />
  </svg>
);
const EdgeIcon = () => (
  <svg width="30" height="30" viewBox="0 0 30 30">
    <defs>
      <linearGradient id="eg" x1="0" y1="0" x2="1" y2=".4"><stop offset="0" stopColor="#1f9fdf" /><stop offset=".55" stopColor="#35c1d8" /><stop offset="1" stopColor="#66e05a" /></linearGradient>
      <linearGradient id="eb" x1="0" y1="0" x2="0" y2="1"><stop offset="0" stopColor="#1b8fdc" /><stop offset="1" stopColor="#0f55a8" /></linearGradient>
    </defs>
    <path d="M0 14C1 5 7 0 15 0c9 0 15 6 15 13 0 5-4 8-8 8-4 0-5-2-4-3 2-3 1-8-5-8-6 0-11 1-13 4z" fill="url(#eg)" />
    <path d="M0 15c0-4 4-7 9-7 6 0 10 4 9.500 9-.3 1-1 1.500-1 2.500 0 2 3 4 6.500 3.500 2 0 3.500-1 4-.5C25 27 20 30 15 30 6 30 0 23 0 15z" fill="url(#eb)" />
    <path d="M11 12.500c-3 3-3 9 1 13 3 3 7 4 10 2.500C20 30 12 31 8 26c-4-5-3-11 3-13.500z" fill="#0c4a92" />
    <path d="M14.500 13.500c2.500 0 4 2 3.800 4-.3 1-1 1.500-.8 2.500.3 1.500 2 2.800 4 3-5 .8-10-1-10.300-5 0-2 1.300-4 3.300-4.500z" fill="#fcedcb" />
  </svg>
);

export default function App() {
  return (
    <Screen>
      <Global />
      <Ribbon>
        <TitleRow>
          <Slot $w={20} $ml={20}><PowerPointIcon /></Slot>
          <Fit w={54} ml={21} size={13}>AutoSave</Fit>
          <Toggle><Knob /><Fit w={18} ml={7} size={13}>Off</Fit></Toggle>
          <Slot $w={20} $ml={16}><SaveIcon /></Slot>
          <Slot $w={20} $ml={15}><UndoIcon /></Slot>
          <Slot $w={8} $ml={8}><Chevron color="#b9b9bd" /></Slot>
          <Slot $w={20} $ml={12}><RedoIcon /></Slot>
          <Slot $w={20} $ml={15}><PresentIcon /></Slot>
          <Slot $w={10} $ml={20}><CustomizeIcon /></Slot>
          <Fit w={252} ml={30} size={13.6}>PSCS173_-REVIEW-1_TEMPLATE_(3)[1]</Fit>
          <Fit w={5} ml={11}>-</Fit>
          <Fit w={74} ml={7} size={13.6}>Protected...</Fit>
          <Fit w={118} ml={18} size={13.6}>• Saved to this PC</Fit>
          <SearchBox><LoupeIcon flip /><Fit w={51} ml={17} size={15.5}>Search</Fit></SearchBox>
          <Avatar><Fit w={17}>CD</Fit></Avatar>
          <Slot $w={14} $ml={39}><Dash /></Slot>
          <Slot $w={14} $ml={46}><RestoreIcon /></Slot>
          <Slot $w={14} $ml={46}><CrossIcon /></Slot>
        </TitleRow>
        <TabRow>
          {TABS.map(([t, ml, w]) => <Fit key={t} w={w} ml={ml}>{t}</Fit>)}
          <OutlineButton $w={27} $h={30} $ml="auto" $mt={-1}><CommentIcon /></OutlineButton>
          <OutlineButton $w={88} $h={30} $ml="10px" $mt={-1} $off>
            <ShareIcon /><Fit w={43} ml={6} color="#b5b5b5">Share</Fit><Slot $w={8} $ml={7}><Chevron color="#b5b5b5" /></Slot>
          </OutlineButton>
        </TabRow>
      </Ribbon>
      <Banner>
        <ShieldIcon />
        <Fit w={120} ml={11}>PROTECTED VIEW</Fit>
        <Fit w={747} ml={12}><Underlined>Be careful—files from the Internet can contain viruses. Unless you need to edit, it's safer to stay in Protected View.</Underlined></Fit>
        <OutlineButton $w={120} $h={32} $ml="13px"><Fit w={96}>Enable Editing</Fit></OutlineButton>
        <Slot $w={12} $ml={817}><CrossIcon size={11} /></Slot>
      </Banner>

      <Body>
        <ThumbPane>
          <ThumbList>
            {SLIDES.map(({ n, title, body }) => (
              <ThumbItem key={n}>
                <Num $on={n === 6}>{n}</Num>
                <Thumb $on={n === 6}><Shrink><Slide mini title={title}>{body}</Slide></Shrink></Thumb>
              </ThumbItem>
            ))}
          </ThumbList>
          <VScroll $h={854} $pt={6}><Tri $up /><VThumb $h={586} $mt={203} /><Tri $mt="38px" /></VScroll>
        </ThumbPane>
        <Stage>
          <SlideArea>
            <SlideEdge><Slide title={SLIDES[3].title}><GanttPicture /></Slide></SlideEdge>
            <ScrollColumn>
              <VScroll $h={742} $pt={6}><Tri $up /><VThumb $h={87} $mt={445} /><Tri $mt="181px" /></VScroll>
              <Tri $up $mt="3px" /><Tri $up $mt="-2px" />
              <Tri $mt="5px" /><Tri $mt="-2px" />
            </ScrollColumn>
          </SlideArea>
        </Stage>
      </Body>

      <StatusBar>
        <Fit w={66} ml={15}>Slide 6 of 8</Fit>
        <Fit w={130} ml={41}>English (United States)</Fit>
        <Fit w={176} ml={912}>Opening file in Protected View</Fit>
        <Slot $w={12} $ml={20}><CrossIcon size={12} /></Slot>
        <Slot $w={21} $ml={22}><svg width="21" height="20" viewBox="0 0 21 20" {...st}><path d="M0 9h21M0 14h21M0 19h21M7 4.500l3.500-3.500L14 4.500" /></svg></Slot>
        <Fit w={35} ml={1}>Notes</Fit>
        <ViewKey><svg width="18" height="15" viewBox="0 0 18 15" {...st}><path d="M.8.800h16.400v13.400H.8zM4 .8v13.400M4 11h13M8 3.500h6v4.500H8z" /></svg></ViewKey>
        <Slot $w={18} $ml={16}><svg width="18" height="15" viewBox="0 0 18 15" {...st}><path d="M.8.800h6v5h-6zM11 .8h6v5h-6zM.8 9.200h6v5h-6zM11 9.200h6v5h-6z" /></svg></Slot>
        <Slot $w={17} $ml={32}><svg width="17" height="16" viewBox="0 0 17 16" {...st}><path d="M8.500 2v13.500M8.500 2C6 .5 3 .5.800 1v12.500c3-.5 5.500 0 7.700 1.500 2.200-1.500 4.700-2 7.700-1.500V1C14 .5 11 .5 8.500 2zM3 4.500h3M3 7.500h3M3 10.500h3M11 4.500h3M11 7.500h3M11 10.500h3" strokeWidth="1.100" /></svg></Slot>
        <Slot $w={18} $ml={33}><svg width="17" height="17" viewBox="0 0 17 17" {...st}><path d="M0 1h17M2 1v8.500h13V1M8.500 9.500v6.500M4.500 16.200h8M6 5h5" /></svg></Slot>
        <Slot $w={10} $ml={23}><Dash $w={10} /></Slot>
        <Slot $w={125} $ml={6}><svg width="125" height="14" viewBox="0 0 125 14"><path d="M0 7.500h125M62.500 4v7" stroke="#777" /><rect x="51.500" width="5.500" height="14" fill="#666" /></svg></Slot>
        <Slot $w={11} $ml={5}><svg width="11" height="11" viewBox="0 0 11 11" {...st}><path d="M5.500 0v11M0 5.500h11" strokeWidth="1.200" /></svg></Slot>
        <Fit w={25} ml={16}>87%</Fit>
        <Slot $w={20} $ml={14}><svg width="20" height="18" viewBox="0 0 20 18" {...st}><path d="M5.500 5h9v8h-9zM7.500 2.500 10 .5l2.500 2M7.500 15.500l2.500 2 2.500-2M3 6.500.800 9 3 11.500M17 6.500 19.200 9 17 11.500" /></svg></Slot>
      </StatusBar>

      <Taskbar>
        <AppIcon $w={34} $ml={24} $h={34}><HazeIcon /><Count $x={14} $y={-6} $c="#c4281c">6</Count></AppIcon>
        <TwoLine $w={40} $ml={5}><Fit w={30}>75°F</Fit><Fit w={33} color="#66604f">Haze</Fit></TwoLine>
        <AppIcon $w={29} $ml={509}><WindowsIcon /></AppIcon>
        <SearchPill><LoupeIcon size={18} color="#222" sw={1.9} /><Fit w={52} ml={13} size={15.5}>Search</Fit><Slot $w={64} $ml={110}><CliffArt /></Slot></SearchPill>
        <AppIcon $ml={16}>
          <svg width="30" height="28" viewBox="0 0 30 28"><rect y="8" width="23" height="20" rx="1" fill="#2c2c2a" /><rect x="8" width="22" height="20" rx="1" fill="#f2f2f0" /><path d="M8 8h15v12H8z" fill="#bdbdbb" /></svg>
        </AppIcon>
        <AppIcon $ml={26}><FolderIcon /><RunMark /></AppIcon>
        <AppIcon $ml={25}><ChromeIcon /><RunMark /></AppIcon>
        <AppIcon $ml={25}>
          <svg width="30" height="21" viewBox="0 0 30 21"><rect width="30" height="21" rx="4" fill="#f00" /><path d="M12 6v9l7.500-4.500z" fill="#fff" /></svg>
        </AppIcon>
        <AppIcon $ml={25}><EdgeIcon /></AppIcon>
        <ActiveApp $ml={16} $w={43} $h={49}><PowerPointIcon size={30} /><RunMark $on /></ActiveApp>
        <AppIcon $ml={21}><FaWhatsapp size={34} color="#128a5a" /><Count $x={16} $y={-6} $c="#0f7b0f">1</Count><RunMark /></AppIcon>
        <Slot $w={14} $ml={325}><Chevron w={14} up color="#222" sw={0.9} /></Slot>
        <TwoLine $w={30} $ml={26} $align="center"><Fit w={28}>ENG</Fit><Fit w={18}>US</Fit></TwoLine>
        <Slot $w={22} $ml={21}>
          <svg width="21" height="16" viewBox="0 0 22 16" fill="none" stroke="#222" strokeWidth="1.400" strokeLinecap="round"><path d="M1.500 5.500a13.500 13.500 0 0 1 19 0M4.500 8.500a9.300 9.300 0 0 1 13 0M7.500 11.300a5 5 0 0 1 7 0" /><circle cx="11" cy="14" r="1.200" fill="#222" /></svg>
        </Slot>
        <Slot $w={22} $ml={8}>
          <svg width="22" height="16" viewBox="0 0 22 16" fill="none" stroke="#222" strokeWidth="1.300"><path d="M1 5.500h3L9 1v14l-5-4.500H1zM12 5a4.500 4.500 0 0 1 0 6M14.500 3a7.500 7.500 0 0 1 0 10M17 1a10.500 10.500 0 0 1 0 14" /></svg>
        </Slot>
        <Slot $w={20} $ml={9}>
          <svg width="20" height="13" viewBox="0 0 20 13"><rect x=".7" y=".7" width="16.500" height="11.600" rx="2.500" fill="none" stroke="#222" strokeWidth="1.300" /><rect x="2.700" y="2.700" width="9.500" height="7.600" fill="#222" /><path d="M18 4h1.500v5H18z" fill="#222" /></svg>
        </Slot>
        <TwoLine $w={68} $ml={22} $align="flex-end"><Fit w={63}>10:10 AM</Fit><Fit w={68}>2/19/2025</Fit></TwoLine>
      </Taskbar>
    </Screen>
  );
}
